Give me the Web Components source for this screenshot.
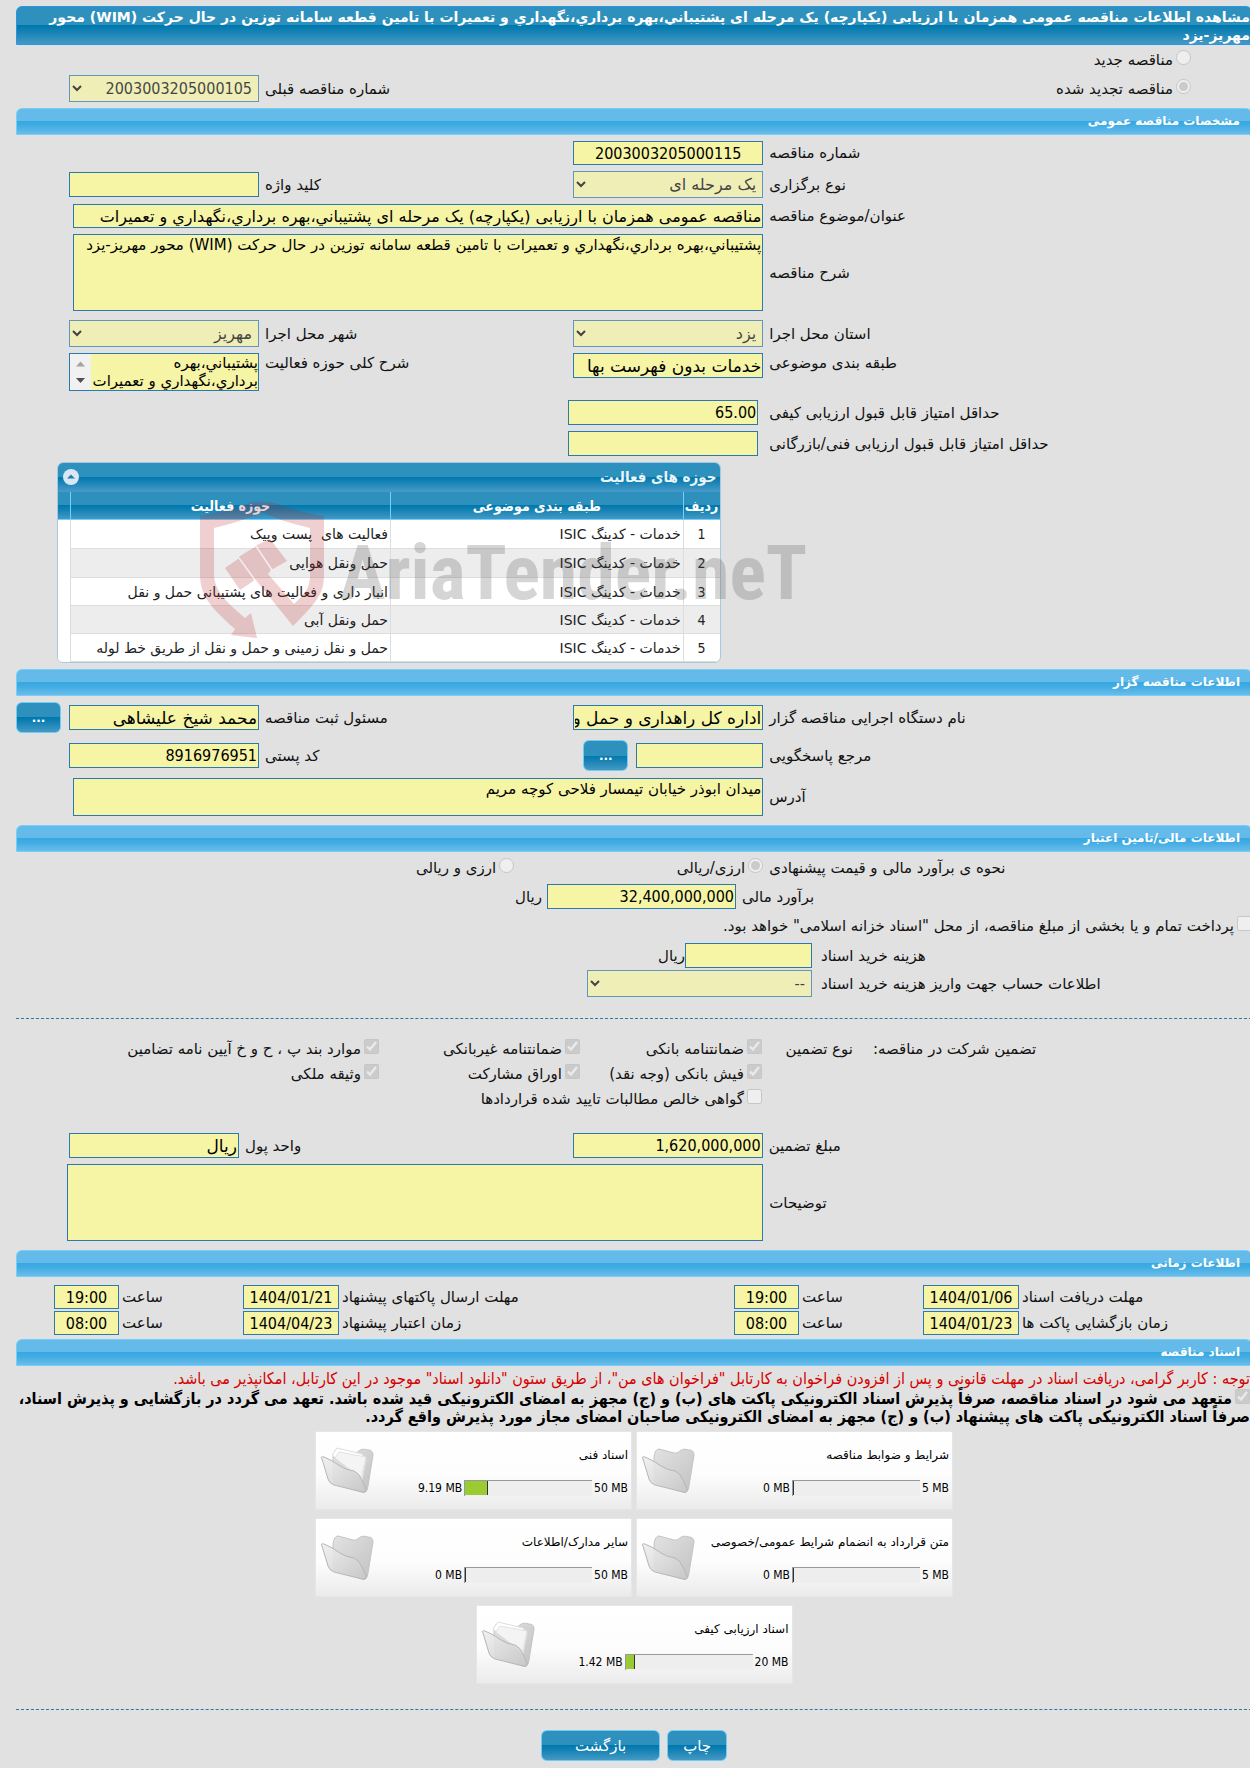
<!DOCTYPE html>
<html lang="fa" dir="rtl">
<head>
<meta charset="utf-8">
<title>مشاهده اطلاعات مناقصه</title>
<style>
  :root{
    --field-bg:#f6f4a5;
    --field-border:#2b79ad;
    --line:#2b79a0;
    --dark-bar:linear-gradient(#2e90bd 0%,#2e90bd 50%,#0078ae 50%,#0e7fb2 62%,#4599c4 100%);
    --condensed:"DejaVu Sans Condensed","DejaVu Sans",sans-serif;
  }
  *{box-sizing:border-box;}
  body{
    margin:0;
    padding-top:6px;
    background:#e1e1e1;
    color:#111;
    font-family:"DejaVu Sans",sans-serif;
    font-size:15px;
    overflow-x:hidden;
  }
  /* the form runs a little past the window on its start side */
  main{margin:0 -2px 0 16px;}
  .stack{display:grid;gap:6px;padding:6px 0;}
  .after-area{margin-top:3px;}
  .lead{text-align:end;padding-inline-end:6px;white-space:nowrap;}
  .keep{white-space:nowrap;}
  .first-choice{padding-inline-start:61px;}
  .two{grid-column:span 2;}
  .options{grid-column:span 3;display:grid;grid-template-columns:249px 1fr;}
  more-button{justify-self:end;}
  .rule{border:0;border-top:1px dashed var(--line);margin:0;}
  .guarantee{
    display:grid;
    grid-template-columns:399px 91px 182px 201px 1fr;
    grid-auto-rows:25px;
    align-items:center;
    margin:17px 0 22px;
  }
  .guarantee .type{grid-column:3;}
  .guarantee .lead{padding-inline-end:20px;}
  .guarantee .wide{grid-column:3 / -1;}
  .notice{margin:3px 2px 0;line-height:20px;font-family:var(--condensed);font-size:16px;color:#d60000;}
  .pledge{margin:0 2px 5px -8px;line-height:18px;font-family:var(--condensed);font-size:16px;font-weight:bold;color:#000;}
  .docs{display:flex;flex-wrap:wrap;justify-content:center;gap:8px 4px;padding:0 240px;}
  .actions{display:flex;justify-content:center;gap:7px;padding:20px 0 6px;}
</style>
</head>
<body>
<main>
  <title-bar>مشاهده اطلاعات مناقصه عمومی همزمان با ارزیابی (یکپارچه) یک مرحله ای پشتیباني،بهره برداري،نگهداري و تعمیرات با تامین قطعه سامانه توزین در حال حرکت (WIM) محور <span class="keep">مهریز-یزد</span></title-bar>

  <form-row style="min-height:30px"><choice-item class="first-choice two" type="radio">مناقصه جدید</choice-item></form-row>
  <form-row style="margin-bottom:6px">
    <choice-item class="first-choice two" type="radio" checked>مناقصه تجدید شده</choice-item>
    <tender-field label="شماره مناقصه قبلی" kind="select" value="2003003205000105"></tender-field>
  </form-row>

  <section-bar>مشخصات مناقصه عمومی</section-bar>
  <div class="stack">
    <form-row><tender-field label="شماره مناقصه" value="2003003205000115" centered></tender-field></form-row>
    <form-row>
      <tender-field label="نوع برگزاری" kind="select" value="یک مرحله ای"></tender-field>
      <tender-field label="کلید واژه"></tender-field>
    </form-row>
    <form-row><tender-field wide label="عنوان/موضوع مناقصه" value="مناقصه عمومی همزمان با ارزیابی (یکپارچه) یک مرحله ای پشتیباني،بهره برداري،نگهداري و تعمیرات"></tender-field></form-row>
    <form-row><tender-field wide label="شرح مناقصه" kind="area" style="--area-height:77px" value="پشتیباني،بهره برداري،نگهداري و تعمیرات با تامین قطعه سامانه توزین در حال حرکت (WIM) محور مهریز-یزد"></tender-field></form-row>
    <form-row class="after-area">
      <tender-field label="استان محل اجرا" kind="select" value="یزد"></tender-field>
      <tender-field label="شهر محل اجرا" kind="select" value="مهریز"></tender-field>
    </form-row>
    <form-row top>
      <tender-field label="طبقه بندی موضوعی" value="خدمات بدون فهرست بها"></tender-field>
      <tender-field label="شرح کلی حوزه فعالیت" kind="scroll" value="پشتیباني،بهره برداري،نگهداري و تعمیرات"></tender-field>
    </form-row>
    <form-row class="after-area"><tender-field inset label="حداقل امتیاز قابل قبول ارزیابی کیفی" value="65.00"></tender-field></form-row>
    <form-row><tender-field inset label="حداقل امتیاز قابل قبول ارزیابی فنی/بازرگانی"></tender-field></form-row>
    <activity-table></activity-table>
  </div>

  <section-bar>اطلاعات مناقصه گزار</section-bar>
  <div class="stack" style="gap:7px">
    <form-row>
      <tender-field label="نام دستگاه اجرایی مناقصه گزار" value="اداره کل راهداری و حمل و نقل جاده ای استان یزد"></tender-field>
      <tender-field label="مسئول ثبت مناقصه" value="محمد شیخ علیشاهی"></tender-field>
      <more-button></more-button>
    </form-row>
    <form-row>
      <tender-field label="مرجع پاسخگویی" style="--control-width:127px;--cell-gap:8px"><more-button></more-button></tender-field>
      <tender-field label="کد پستی" value="8916976951"></tender-field>
    </form-row>
    <form-row><tender-field wide label="آدرس" kind="area" style="--area-height:38px" value="میدان ابوذر خیابان تیمسار فلاحی کوچه مریم"></tender-field></form-row>
  </div>

  <section-bar class="after-area">اطلاعات مالی/تامین اعتبار</section-bar>
  <div class="stack">
    <form-row style="min-height:20px">
      <span class="lead">نحوه ی برآورد مالی و قیمت پیشنهادی</span>
      <div class="options">
        <choice-item type="radio" checked>ارزی/ریالی</choice-item>
        <choice-item type="radio">ارزی و ریالی</choice-item>
      </div>
    </form-row>
    <form-row layout="amount"><tender-field label="برآورد مالی" value="32,400,000,000" style="--control-width:189px">ریال</tender-field></form-row>
    <choice-item type="checkbox" style="min-height:22px">پرداخت تمام و یا بخشی از مبلغ مناقصه، از محل "اسناد خزانه اسلامی" خواهد بود.</choice-item>
    <form-row layout="fee" style="row-gap:2px">
      <tender-field label="هزینه خرید اسناد" style="--control-width:127px;--cell-gap:0px;--label-gap:9px">ریال</tender-field>
      <tender-field label="اطلاعات حساب جهت واریز هزینه خرید اسناد" kind="select" value="--" style="--control-width:225px;--label-gap:9px"></tender-field>
    </form-row>
  </div>

  <hr class="rule" style="margin-top:15px">
  <div class="guarantee">
    <span class="lead">تضمین شرکت در مناقصه:</span>
    <span>نوع تضمین</span>
    <choice-item type="checkbox" checked>ضمانتنامه بانکی</choice-item>
    <choice-item type="checkbox" checked>ضمانتنامه غیربانکی</choice-item>
    <choice-item type="checkbox" checked>موارد بند پ ، ح و خ آیین نامه تضامین</choice-item>
    <choice-item class="type" type="checkbox" checked>فیش بانکی (وجه نقد)</choice-item>
    <choice-item type="checkbox" checked>اوراق مشارکت</choice-item>
    <choice-item type="checkbox" checked>وثیقه ملکی</choice-item>
    <choice-item class="wide" type="checkbox">گواهی خالص مطالبات تایید شده قراردادها</choice-item>
  </div>
  <div class="stack" style="padding-top:0">
    <form-row layout="currency">
      <tender-field label="مبلغ تضمین" value="1,620,000,000"></tender-field>
      <tender-field label="واحد پول" value="ریال"></tender-field>
    </form-row>
    <form-row><tender-field wide label="توضیحات" kind="area" style="--area-height:77px;--area-end:-2px"></tender-field></form-row>
  </div>

  <section-bar class="after-area">اطلاعات زمانی</section-bar>
  <form-row layout="dates" style="margin:8px 0 4px;row-gap:2px;--label-gap:3px">
    <tender-field label="مهلت دریافت اسناد" value="1404/01/06" centered></tender-field>
    <tender-field label="ساعت" value="19:00" centered></tender-field>
    <tender-field label="مهلت ارسال پاکتهای پیشنهاد" value="1404/01/21" centered></tender-field>
    <tender-field label="ساعت" value="19:00" centered></tender-field>
    <span></span>
    <tender-field label="زمان بازگشایی پاکت ها" value="1404/01/23" centered></tender-field>
    <tender-field label="ساعت" value="08:00" centered></tender-field>
    <tender-field label="زمان اعتبار پیشنهاد" value="1404/04/23" centered></tender-field>
    <tender-field label="ساعت" value="08:00" centered></tender-field>
    <span></span>
  </form-row>

  <section-bar>اسناد مناقصه</section-bar>
  <p class="notice">توجه : کاربر گرامی، دریافت اسناد در مهلت قانونی و پس از افزودن فراخوان به کارتابل "فراخوان های من"، از طریق ستون "دانلود اسناد" موجود در این کارتابل، امکانپذیر می باشد.</p>
  <choice-item class="pledge" type="checkbox" checked flow>متعهد می شود در اسناد مناقصه، صرفاً پذیرش اسناد الکترونیکی پاکت های (ب) و (ج) مجهز به امضای الکترونیکی قید شده باشد. تعهد می گردد در بازگشایی و پذیرش اسناد، صرفاً اسناد الکترونیکی پاکت های پیشنهاد (ب) و (ج) مجهز به امضای الکترونیکی صاحبان امضای مجاز مورد پذیرش واقع گردد.</choice-item>
  <div class="docs">
    <doc-card used="0" total="5">شرایط و ضوابط مناقصه</doc-card>
    <doc-card used="9.19" total="50">اسناد فنی</doc-card>
    <doc-card used="0" total="5">متن قرارداد به انضمام شرایط عمومی/خصوصی</doc-card>
    <doc-card used="0" total="50">سایر مدارک/اطلاعات</doc-card>
    <doc-card used="1.42" total="20">اسناد ارزیابی کیفی</doc-card>
  </div>
  <hr class="rule" style="margin-top:25px">
  <div class="actions">
    <action-button style="--pad:15px">چاپ</action-button>
    <action-button style="--pad:33px">بازگشت</action-button>
  </div>
</main>

<script>
class TitleBar extends HTMLElement {
  constructor() {
    super();
    this.attachShadow({mode:'open'}).innerHTML = `
      <style>
        :host{display:block;}
        h1{
          margin:0;
          padding:1px 1px 0;
          box-sizing:border-box;
          border:1px solid #2a95e6;
          border-radius:6px 6px 0 0;
          background:var(--dark-bar);
          color:#fff;
          font-size:14px;
          line-height:18px;
        }
      </style>
      <h1><slot></slot></h1>`;
  }
}

class SectionBar extends HTMLElement {
  constructor() {
    super();
    this.attachShadow({mode:'open'}).innerHTML = `
      <style>
        :host{display:block;}
        h2{
          margin:0;
          padding:0 11px;
          border:1px solid #74d0f8;
          border-radius:6px 6px 0 0;
          background:linear-gradient(#64bbea 0%,#64bbea 48%,#38a8e1 50%,#40ace3 65%,#6abcea 100%);
          color:#fff;
          font-size:12px;
          line-height:25px;
        }
      </style>
      <h2><slot></slot></h2>`;
  }
}

/* one grid line of the form; fields inside are display:contents */
class FormRow extends HTMLElement {
  constructor() {
    super();
    this.attachShadow({mode:'open'}).innerHTML = `
      <style>
        :host{
          display:grid;
          grid-template-columns:minmax(0,14fr) 190px minmax(0,9fr) 190px 53px;
          align-items:center;
        }
        :host([top]){align-items:start;}
        :host([layout="amount"]){grid-template-columns:516px minmax(0,1fr);}
        :host([layout="fee"]){grid-template-columns:440px minmax(0,1fr);}
        :host([layout="currency"]){grid-template-columns:minmax(0,22fr) 190px minmax(0,15fr) 170px 53px;}
        :host([layout="dates"]){grid-template-columns:233px 96px 124px 65px minmax(0,1fr) 96px 124px 65px 38px;}
      </style>
      <slot></slot>`;
  }
}

class TenderField extends HTMLElement {
  constructor() {
    super();
    const kind = this.getAttribute('kind') || 'text';
    const value = this.getAttribute('value') || '';
    //numbers are set narrower than words
    const numeric = /^[\d.,:\/-]+$/.test(value) ? 'class="numeric"' : '';
    let control = `<input id="control" type="text" readonly value="${value}" ${numeric}>`;
    if (kind === 'select') {
      control = `<select id="control" disabled ${numeric}><option>${value}</option></select>`;
    } else if (kind === 'area') {
      control = `<textarea id="control" readonly>${value}</textarea>`;
    } else if (kind === 'scroll') {
      control = `
        <div class="scroller">
          <textarea id="control" readonly>${value}</textarea>
          <svg width="21" height="36" viewBox="0 0 21 36" aria-hidden="true">
            <path d="M6 12.500L10.500 7.500L15 12.500Z" fill="#a3a3a3"/>
            <path d="M6 24L10.500 29L15 24Z" fill="#505050"/>
          </svg>
        </div>`;
    }
    this.attachShadow({mode:'open'}).innerHTML = `
      <style>
        :host{display:contents;}
        *{box-sizing:border-box;}
        label{text-align:end;padding-inline-end:var(--label-gap,6px);line-height:20px;white-space:nowrap;}
        .cell{display:flex;align-items:center;gap:var(--cell-gap,5px);min-width:0;}
        :host([wide]) .cell{grid-column:span 3;margin-inline-end:var(--area-end,4px);}
        :host([inset]) .cell{margin-inline:5px -5px;}
        input,select,textarea{
          width:var(--control-width,100%);
          flex:none;
          margin:0;
          border:1px solid var(--field-border);
          border-radius:0;
          background-color:var(--field-bg);
          color:#000;
          font-family:inherit;
          font-size:17px;
          outline:0;
        }
        input{height:25px;padding:1px;}
        :host([wide]) input{height:24px;font-size:16px;}
        :host([centered]) input{text-align:center;height:24px;}
        select{height:27px;padding:0 2px;font-size:16px;opacity:.7;}
        .numeric{font-family:var(--condensed);font-size:16px;}
        textarea{
          display:block;
          height:var(--area-height);
          padding:1px;
          resize:none;
          overflow:hidden;
          font-size:15px;
          line-height:18px;
        }
        .scroller{
          display:flex;
          width:100%;
          height:38px;
          border:1px solid var(--field-border);
          background:#f1f1f1;
        }
        .scroller textarea{flex:1;width:0;height:36px;border:0;padding:0;}
      </style>
      <label for="control">${this.getAttribute('label')}</label>
      <div class="cell">${control}<slot></slot></div>`;
  }
}

class ChoiceItem extends HTMLElement {
  constructor() {
    super();
    const type = this.getAttribute('type');
    const checked = this.hasAttribute('checked') ? 'checked' : '';
    this.attachShadow({mode:'open'}).innerHTML = `
      <style>
        :host{display:flex;align-items:center;white-space:nowrap;}
        :host([flow]){display:block;white-space:normal;}
        input{width:15px;height:15px;margin:0 0 5px;margin-inline-end:3px;flex:none;}
        label{display:flex;align-items:center;}
        :host([flow]) label{display:inline;}
        :host([flow]) input{margin-bottom:0;vertical-align:0;}
      </style>
      <label><input type="${type}" disabled ${checked}><slot></slot></label>`;
  }
}

class ActionButton extends HTMLElement {
  constructor() {
    super();
    this.attachShadow({mode:'open'}).innerHTML = `
      <style>
        :host{display:block;}
        button{
          height:31px;
          padding:0 var(--pad,16px);
          border:1px solid #6fcdf5;
          border-radius:6px;
          background:var(--dark-bar);
          color:#fff;
          font-family:inherit;
          font-size:15px;
        }
      </style>
      <button type="button"><slot></slot></button>`;
  }
}

class MoreButton extends HTMLElement {
  constructor() {
    super();
    this.attachShadow({mode:'open'}).innerHTML = `
      <style>
        :host{display:block;}
        button{
          display:block;
          width:45px;
          height:31px;
          padding:0;
          border:1px solid #6fcdf5;
          border-radius:6px;
          background:var(--dark-bar);
          color:#fff;
          font-family:inherit;
          font-size:12px;
          font-weight:bold;
        }
      </style>
      <button type="button">...</button>`;
  }
}

class ActivityTable extends HTMLElement {
  constructor() {
    super();
    const rows = [
      'فعالیت های &nbsp;پست وپیک',
      'حمل ونقل هوایی',
      'انبار داری و فعالیت های پشتیبانی حمل و نقل',
      'حمل ونقل آبی',
      'حمل و نقل زمینی و حمل و نقل از طریق خط لوله'
    ];
    this.attachShadow({mode:'open'}).innerHTML = `
      <style>
        :host{display:block;position:relative;margin-inline:43% 41px;}
        *{box-sizing:border-box;}
        .grid{border:1px solid #a6c9e2;border-radius:6px;overflow:hidden;background:#fff;}
        .title{
          display:flex;
          align-items:center;
          justify-content:space-between;
          height:29px;
          padding:0 3px 0 5px;
          border-bottom:1px solid #4297d7;
          background:var(--dark-bar);
          color:#eaf5f7;
          font-family:var(--condensed);
          font-weight:bold;
        }
        .title button{width:16px;height:16px;padding:0;border:0;border-radius:8px;background:#d8e7f3;}
        .title svg{display:block;}
        table{width:100%;border-collapse:separate;border-spacing:0;table-layout:fixed;}
        th{
          height:28px;
          padding:0 1px;
          border-left:1px solid #74d0f8;
          border-bottom:1px solid #74d0f8;
          background:var(--dark-bar);
          color:#fff;
          font-family:var(--condensed);
          font-size:14px;
          white-space:nowrap;
        }
        td{
          height:28px;
          padding:0 2px;
          border-left:1px solid #ddd;
          border-bottom:1px solid #ddd;
          font-size:14px;
          color:#222;
          white-space:nowrap;
        }
        tbody tr:nth-child(-n+2) td{height:29px;}
        th:last-child,td:last-child{border-left:0;}
        td:last-child{background:#fff;border-bottom:0;}
        td:first-child{text-align:center;font-family:var(--condensed);}
        tr:nth-child(even) td:not(:last-child){background:#ededed;}
      </style>
      <div class="grid">
        <div class="title">
          <span>حوزه های فعالیت</span>
          <button type="button" aria-label="بستن">
            <svg width="16" height="16" viewBox="0 0 16 16"><path d="M4 9.500L8 5.500L12 9.500Z" fill="#1f7fb4"/></svg>
          </button>
        </div>
        <table>
          <colgroup><col style="width:37px"><col><col style="width:320px"><col style="width:12px"></colgroup>
          <thead><tr><th>ردیف</th><th>طبقه بندی موضوعی</th><th>حوزه فعالیت</th><th></th></tr></thead>
          <tbody>
            ${rows.map((row, i) => `<tr><td>${i + 1}</td><td>خدمات - کدینگ ISIC</td><td>${row}</td><td></td></tr>`).join('')}
          </tbody>
        </table>
      </div>
      <water-mark></water-mark>`;
  }
}

class WaterMark extends HTMLElement {
  constructor() {
    super();
    this.attachShadow({mode:'open'}).innerHTML = `
      <style>
        :host{
          position:absolute;
          top:39px;
          left:143px;
          display:flex;
          gap:15px;
          direction:ltr;
          pointer-events:none;
        }
        span{
          padding-top:24px;
          font:bold 76px/96px "Roboto Condensed",Roboto,sans-serif;
          color:rgba(80,80,80,.24);
          white-space:nowrap;
        }
      </style>
      <svg width="125" height="138" viewBox="0 0 125 138" aria-hidden="true">
        <g fill="#b8252b" fill-opacity=".22">
          <path d="M0 15C20 12 38 7 46 3Q62 -2 78 3C88 7 104 12 124 15V73C124 93 117 101 93 125L55 78L52 81L40 89L25 67L38 58L40 55L55 46L57 44L70 38L87 60L71 69L68 73L94 103C106 92 110 86 110 74V27Q80 20 62 11Q44 20 14 27V74C15 92 28 102 45 117L51 112L57 137L31 134L35 128C10 106 0 94 0 73Z"/>
        </g>
        <g fill="none" stroke="#fff" stroke-opacity=".7" stroke-width="1.500">
          <path d="M39 57L55 79"/>
          <path d="M56 45L72 69"/>
        </g>
      </svg>
      <span>AriaTender.neT</span>`;
  }
}

class DocCard extends HTMLElement {
  constructor() {
    super();
    const used = Number(this.getAttribute('used'));
    const total = Number(this.getAttribute('total'));
    const papers = `
      <path d="M12 9L17 2L42 8L46 14L42 34Z" fill="#fff" stroke="#dedede"/>
      <path d="M15 12L19 6L46 11L41 32Z" fill="#f4f4f4" stroke="#e2e2e2"/>`;
    this.attachShadow({mode:'open'}).innerHTML = `
      <style>
        :host{
          display:flex;
          justify-content:space-between;
          box-sizing:border-box;
          width:317px;
          height:79px;
          padding:14px 3px 12px 4px;
          border:1px solid #e6e6e6;
          background:linear-gradient(#fff 0%,#fdfdfd 55%,#ebebeb 100%);
          font-size:12px;
          color:#000;
        }
        .info{display:flex;flex-direction:column;gap:15px;line-height:18px;white-space:nowrap;}
        .usage{
          display:flex;
          align-items:center;
          justify-content:flex-end;
          gap:2px;
          direction:ltr;
          font-family:var(--condensed);
        }
        .bar{
          width:127px;
          height:15px;
          border-top:1px solid #999;
          border-left:1px solid #999;
          background:#eee;
        }
        .fill{height:14px;box-sizing:border-box;border-right:1px solid #333;background:#9c3;}
      </style>
      <div class="info">
        <span><slot></slot></span>
        <div class="usage">
          <span>${used} MB</span>
          <div class="bar"><div class="fill" style="width:${used / total * 100}%"></div></div>
          <span>${total} MB</span>
        </div>
      </div>
      <svg width="56" height="50" viewBox="0 0 56 50" aria-hidden="true">
        <defs>
          <linearGradient id="back" x1="0" y1="0" x2="1" y2="1"><stop offset="0" stop-color="#e2e2e2"/><stop offset="1" stop-color="#c2c2c2"/></linearGradient>
          <linearGradient id="front" x1="0" y1="0" x2="1" y2="1"><stop offset="0" stop-color="#efefef"/><stop offset="1" stop-color="#c8c8c8"/></linearGradient>
        </defs>
        <path d="M13 11Q14 3 18 3L33 7Q36 8 39 5Q42 2 48 4Q53 4 53 9L48 40Q47 48 42 46L14 37Z" fill="url(#back)" stroke="#c4c4c4"/>
        ${used ? papers : ''}
        <path d="M2 13Q0 10 4 11Q12 14 20 20Q26 24 34 25Q39 27 42 34L46 43Q47 47 42 46L14 39Q9 37 8 33Z" fill="url(#front)" fill-opacity=".9" stroke="#b6b6b6"/>
      </svg>`;
  }
}

customElements.define('title-bar', TitleBar);
customElements.define('section-bar', SectionBar);
customElements.define('form-row', FormRow);
customElements.define('tender-field', TenderField);
customElements.define('choice-item', ChoiceItem);
customElements.define('action-button', ActionButton);
customElements.define('more-button', MoreButton);
customElements.define('water-mark', WaterMark);
customElements.define('activity-table', ActivityTable);
customElements.define('doc-card', DocCard);
</script>
</body>
</html>
